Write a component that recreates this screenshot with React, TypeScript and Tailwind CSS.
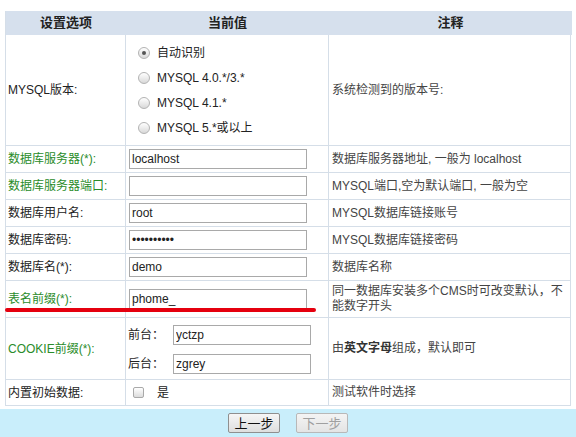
import React from "react";

const FONT = '"Liberation Sans", "Noto Sans CJK SC", sans-serif';

function Radio({ checked }: { checked?: boolean }) {
  return (
    <span className="relative inline-block w-[12px] h-[12px] rounded-full border border-[#b3b3b3] bg-gradient-to-b from-[#ffffff] to-[#d9d9d9] shrink-0">
      {checked && (
        <span className="absolute left-[3px] top-[3px] w-[4px] h-[4px] rounded-full bg-[#555]" />
      )}
    </span>
  );
}

function TextInput({ value, type = "text", w = "w-[178px]" }: { value: string; type?: string; w?: string }) {
  return (
    <input
      type={type}
      readOnly
      value={value}
      className={`${w} h-[20px] border border-[#a9a9a9] bg-white pl-[2px] text-[12px] text-[#222] outline-none`}
      style={{ fontFamily: FONT }}
    />
  );
}

function Row({
  label,
  green,
  h,
  value,
  note,
}: {
  label: string;
  green?: boolean;
  h: string;
  value: React.ReactNode;
  note: React.ReactNode;
}) {
  return (
    <>
      <div className={`${h} flex items-center pl-[2px] border-r border-b border-[#d5dee8] ${green ? "text-[#2a8c2a]" : "text-[#222]"}`}>
        {label}
      </div>
      <div className={`${h} flex items-center border-r border-b border-[#d5dee8]`}>{value}</div>
      <div className={`${h} flex items-center pl-[3px] border-r border-b border-[#d5dee8] text-[#444] leading-[15px]`}>{note}</div>
    </>
  );
}

export default function App() {
  return (
    <div className="relative w-[576px] h-[437px] bg-white overflow-hidden text-[12px]" style={{ fontFamily: FONT }}>
      <div className="pt-[11px] pl-[5px]">
        <div className="w-[566px] grid grid-cols-[120px_203px_242px] border-l border-[#d5dee8]">
          {/* header */}
          <div className="h-[24px] bg-[#d6e0ed] flex items-center justify-center font-bold text-[13px] text-[#222]">设置选项</div>
          <div className="h-[24px] bg-[#d6e0ed] flex items-center justify-center font-bold text-[13px] text-[#222]">当前值</div>
          <div className="h-[24px] bg-[#d6e0ed] flex items-center justify-center font-bold text-[13px] text-[#222] -mr-[1px]">注释</div>

          {/* MYSQL version */}
          <Row
            label="MYSQL版本:"
            h="h-[111px]"
            value={
              <div className="flex flex-col pl-[12px] pt-[1px]">
                {[
                  ["自动识别", true],
                  ["MYSQL 4.0.*/3.*", false],
                  ["MYSQL 4.1.*", false],
                  ["MYSQL 5.*或以上", false],
                ].map(([t, c]) => (
                  <div key={t as string} className="h-[25px] flex items-center gap-[7px] text-[#222]">
                    <Radio checked={c as boolean} />
                    <span>{t as string}</span>
                  </div>
                ))}
              </div>
            }
            note="系统检测到的版本号:"
          />

          <Row
            label="数据库服务器(*):"
            green
            h="h-[27px]"
            value={<div className="pl-[3px]"><TextInput value="localhost" /></div>}
            note="数据库服务器地址, 一般为 localhost"
          />
          <Row
            label="数据库服务器端口:"
            green
            h="h-[27px]"
            value={<div className="pl-[3px]"><TextInput value="" /></div>}
            note="MYSQL端口,空为默认端口, 一般为空"
          />
          <Row
            label="数据库用户名:"
            h="h-[27px]"
            value={<div className="pl-[3px]"><TextInput value="root" /></div>}
            note="MYSQL数据库链接账号"
          />
          <Row
            label="数据库密码:"
            h="h-[27px]"
            value={<div className="pl-[3px]"><TextInput type="password" value="1234567890" /></div>}
            note="MYSQL数据库链接密码"
          />
          <Row
            label="数据库名(*):"
            h="h-[27px]"
            value={<div className="pl-[3px]"><TextInput value="demo" /></div>}
            note="数据库名称"
          />
          <Row
            label="表名前缀(*):"
            green
            h="h-[37px]"
            value={<div className="pl-[3px] -mt-[1px]"><TextInput value="phome_" /></div>}
            note={
              <span>
                同一数据库安装多个CMS时可改变默认，不
                <br />
                能数字开头
              </span>
            }
          />
          <Row
            label="COOKIE前缀(*):"
            green
            h="h-[62px]"
            value={
              <div className="flex flex-col gap-[9px] pl-[2px] pt-[1px]">
                <div className="flex items-center">
                  <span className="w-[45px] text-[#222]">前台：</span>
                  <TextInput value="yctzp" w="w-[138px]" />
                </div>
                <div className="flex items-center">
                  <span className="w-[45px] text-[#222]">后台：</span>
                  <TextInput value="zgrey" w="w-[138px]" />
                </div>
              </div>
            }
            note={
              <span>
                由<b className="text-[#333]">英文字母</b>组成，默认即可
              </span>
            }
          />
          <Row
            label="内置初始数据:"
            h="h-[26px]"
            value={
              <div className="flex items-center pl-[7px] gap-[13px] text-[#222]">
                <span className="inline-block w-[11px] h-[11px] rounded-[2px] border border-[#a9a9a9] bg-gradient-to-b from-[#ffffff] to-[#dcdcdc]" />
                <span>是</span>
              </div>
            }
            note="测试软件时选择"
          />
        </div>
      </div>

      <div className="mt-[3px] h-[30px] bg-[#c9eefb] flex items-start justify-center gap-[16px] pt-[4px]">
        <button className="w-[52px] h-[20px] border border-[#8f8f8f] rounded-[2px] bg-gradient-to-b from-[#f6f6f6] to-[#dedede] text-[13px] text-[#111] leading-none">
          上一步
        </button>
        <button className="w-[52px] h-[20px] border border-[#b8b8b8] rounded-[2px] bg-gradient-to-b from-[#f4f4f4] to-[#e4e4e4] text-[13px] text-[#a0a0a0] leading-none">
          下一步
        </button>
      </div>

      {/* red annotation underline */}
      <div className="absolute left-[5px] top-[308px] w-[311px] h-[4px] rounded-full bg-[#e5000f]" />
    </div>
  );
}
